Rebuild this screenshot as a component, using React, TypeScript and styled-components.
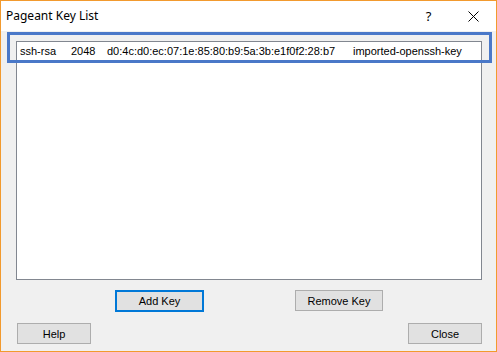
import React from 'react';
import styled, { createGlobalStyle } from 'styled-components';

const GlobalStyle = createGlobalStyle`
  html, body {
    margin: 0;
    padding: 0;
    background: #ffffff;
  }
  * {
    box-sizing: border-box;
  }
`;

const Window = styled.div`
  position: relative;
  width: 497px;
  height: 352px;
  display: flex;
  flex-direction: column;
  border: 1px solid #f29a2e;
  background-color: #f0f0f0;
  font-family: 'Liberation Sans', Arial, sans-serif;
  font-size: 11px;
  color: #000000;
`;

const TitleBar = styled.div`
  height: 30px;
  display: flex;
  align-items: center;
  background-color: #ffffff;
  padding-left: 5px;
`;

const Title = styled.span`
  flex: 1;
  font-family: 'Noto Sans', 'Open Sans', sans-serif;
  font-size: 12px;
  margin-top: -2px;
`;

const TitleButton = styled.span<{ $shift?: number }>`
  width: 45px;
  display: flex;
  justify-content: center;
  margin-left: ${({ $shift }) => $shift ?? 0}px;
  font-family: 'Noto Sans', sans-serif;
  font-size: 13px;
`;

const Body = styled.div`
  flex: 1;
  display: flex;
  flex-direction: column;
  padding: 10px 14px 7px 15px;
`;

const KeyList = styled.div`
  height: 239px;
  background-color: #ffffff;
  border: 1px solid #828790;
  padding: 3px 1px;
`;

const KeyRow = styled.div`
  display: flex;
  height: 13px;
  line-height: 13px;
  white-space: nowrap;
`;

const Cell = styled.span<{ $width?: number }>`
  width: ${({ $width }) => ($width ? `${$width}px` : 'auto')};
  padding-left: 2px;
`;

const ActionRow = styled.div`
  display: flex;
  justify-content: center;
  gap: 91px;
  margin-top: 10px;
`;

const FooterRow = styled.div`
  display: flex;
  justify-content: space-between;
  margin-top: 11px;
  padding: 0 0 0 1px;
`;

const Button = styled.button<{ $width: number; $default?: boolean }>`
  width: ${({ $width }) => $width}px;
  height: ${({ $default }) => ($default ? 22 : 21)}px;
  background-color: #e1e1e1;
  border: ${({ $default }) => ($default ? '2px solid #0078d7' : '1px solid #adadad')};
  font-family: 'Liberation Sans', Arial, sans-serif;
  font-size: 11px;
  color: #000000;
  padding: 0;
`;

const Highlight = styled.div`
  position: absolute;
  left: 6px;
  top: 31px;
  width: 485px;
  height: 31px;
  border: 3px solid #4a78c8;
  pointer-events: none;
`;

const keys = [
  {
    type: 'ssh-rsa',
    bits: '2048',
    fingerprint: 'd0:4c:d0:ec:07:1e:85:80:b9:5a:3b:e1f0f2:28:b7',
    comment: 'imported-openssh-key',
  },
];

const CloseIcon = () => (
  <svg width="11" height="11" viewBox="0 0 11 11">
    <path d="M0.5 0.5 L10.5 10.5 M10.5 0.5 L0.5 10.5" stroke="#000" strokeWidth="1" fill="none" />
  </svg>
);

const App: React.FC = () => {
  return (
    <>
      <GlobalStyle />
      <Window>
        <TitleBar>
          <Title>Pageant Key List</Title>
          <TitleButton $shift={0}>?</TitleButton>
          <TitleButton>
            <CloseIcon />
          </TitleButton>
        </TitleBar>
        <Body>
          <KeyList>
            {keys.map((key) => (
              <KeyRow key={key.fingerprint}>
                <Cell $width={51}>{key.type}</Cell>
                <Cell $width={36}>{key.bits}</Cell>
                <Cell $width={246}>{key.fingerprint}</Cell>
                <Cell>{key.comment}</Cell>
              </KeyRow>
            ))}
          </KeyList>
          <ActionRow>
            <Button $width={89} $default>Add Key</Button>
            <Button $width={88}>Remove Key</Button>
          </ActionRow>
          <FooterRow>
            <Button $width={74}>Help</Button>
            <Button $width={74}>Close</Button>
          </FooterRow>
        </Body>
        <Highlight />
      </Window>
    </>
  );
};

export default App;
